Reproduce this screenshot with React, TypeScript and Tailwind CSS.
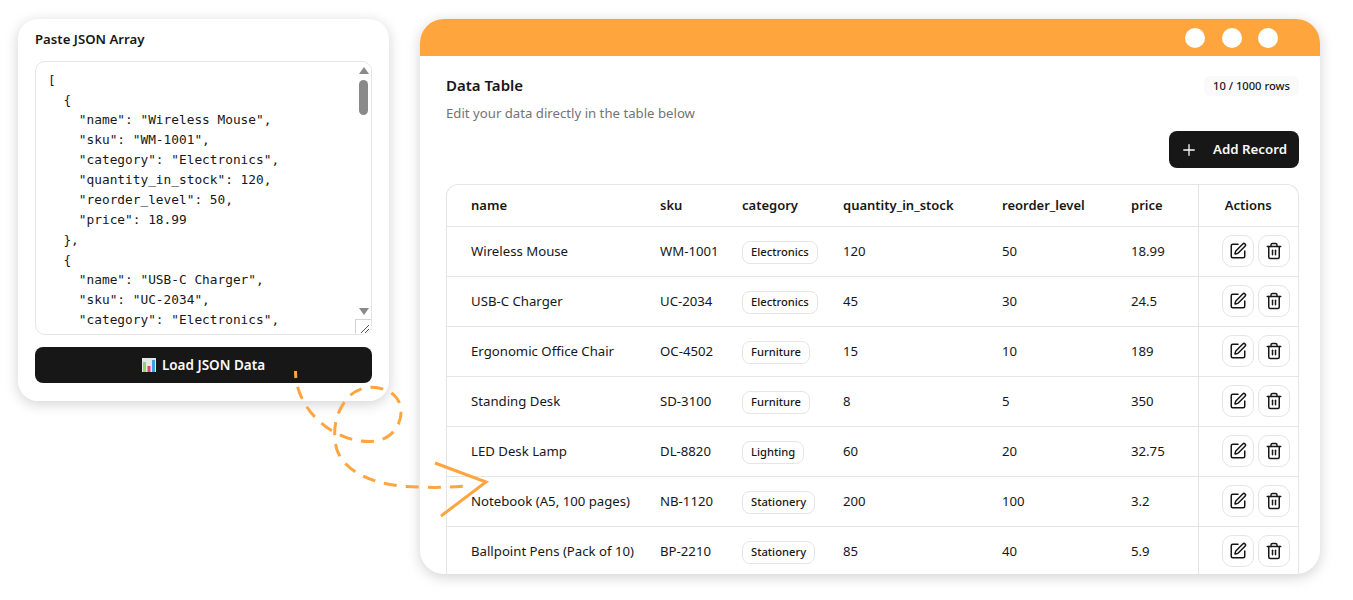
import { Plus, SquarePen, Trash2 } from "lucide-react";

const sampleJson = `[
  {
    "name": "Wireless Mouse",
    "sku": "WM-1001",
    "category": "Electronics",
    "quantity_in_stock": 120,
    "reorder_level": 50,
    "price": 18.99
  },
  {
    "name": "USB-C Charger",
    "sku": "UC-2034",
    "category": "Electronics",
    "quantity_in_stock": 45,`;

const columns = ["name", "sku", "category", "quantity_in_stock", "reorder_level", "price"];

const rows = [
  ["Wireless Mouse", "WM-1001", "Electronics", "120", "50", "18.99"],
  ["USB-C Charger", "UC-2034", "Electronics", "45", "30", "24.5"],
  ["Ergonomic Office Chair", "OC-4502", "Furniture", "15", "10", "189"],
  ["Standing Desk", "SD-3100", "Furniture", "8", "5", "350"],
  ["LED Desk Lamp", "DL-8820", "Lighting", "60", "20", "32.75"],
  ["Notebook (A5, 100 pages)", "NB-1120", "Stationery", "200", "100", "3.2"],
  ["Ballpoint Pens (Pack of 10)", "BP-2210", "Stationery", "85", "40", "5.9"],
];

function ChartIcon() {
  return (
    <svg width="14" height="14" viewBox="0 0 14 14" className="shrink-0">
      <rect x="0" y="0" width="14" height="14" fill="#e8e4e8" />
      <rect x="1" y="4" width="3" height="10" fill="#8ed36f" />
      <rect x="5.5" y="8" width="3" height="6" fill="#ea3d7e" />
      <rect x="10" y="2" width="3" height="12" fill="#3f9fe0" />
    </svg>
  );
}

function ConnectorArrow() {
  return (
    <svg
      className="absolute left-0 top-0 pointer-events-none"
      width="1353"
      height="600"
      viewBox="0 0 1353 600"
      fill="none"
      stroke="#ffa53e"
      strokeWidth="3"
    >
      <path
        d="M295.5 371 C295.5 395 310 418 334 432 C352 442 376 446 390 435 C403 424 405 405 394 395 C380 384 358 384 346 400 C335 414 332 432 337 450 C346 474 378 487 420 487 C438 488 452 487 466 486"
        strokeDasharray="13 9"
        strokeDashoffset="6"
      />
      <path d="M435 463 L486 482 L441 516" />
    </svg>
  );
}

export default function App() {
  return (
    <div className="relative w-[1353px] h-[600px] overflow-hidden bg-white font-['Noto_Sans',sans-serif] text-[#171717]">
      <div className="flex items-start pl-[18px] pt-[19px] gap-[31px]">
        {/* Paste panel */}
        <div className="w-[371px] shrink-0 rounded-[20px] bg-white px-[17px] pt-[11px] pb-[18px] shadow-[0_3px_14px_rgba(0,0,0,0.18)]">
          <h2 className="text-[13.2px] leading-[18px] font-semibold">Paste JSON Array</h2>
          <div className="relative mt-[13px] h-[274px] rounded-[10px] border border-[#e5e5e5] overflow-hidden">
            <textarea
              readOnly
              wrap="off"
              value={sampleJson}
              className="block w-full h-full resize-none overflow-hidden px-3 pt-[8px] font-['DejaVu_Sans_Mono',monospace] text-[12.8px] leading-[20px] text-[#171717] outline-none"
            />
            {/* scrollbar */}
            <div className="absolute right-0 top-0 bottom-0 w-[16px] bg-white">
              <div className="absolute left-[4px] top-[5px] w-0 h-0 border-x-[5px] border-x-transparent border-b-[7px] border-b-[#8a8a8a]" />
              <div className="absolute left-[4px] top-[18px] w-[9px] h-[35px] rounded-full bg-[#8a8a8a]" />
              <div className="absolute left-[4px] bottom-[19px] w-0 h-0 border-x-[5px] border-x-transparent border-t-[7px] border-t-[#8a8a8a]" />
              <div className="absolute right-0 bottom-0 w-[16px] h-[15px] border-l border-t border-[#d4d4d4] bg-white">
                <svg width="15" height="14" viewBox="0 0 15 14" stroke="#555" strokeWidth="1" fill="none">
                  <path d="M5 13 L13 5 M9 13 L13 9" />
                </svg>
              </div>
            </div>
          </div>
          <button className="mt-[12px] flex h-[36px] w-full items-center justify-center gap-[6px] rounded-[8px] bg-[#171717] text-[13.5px] font-semibold text-[#fafafa]">
            <ChartIcon />
            Load JSON Data
          </button>
        </div>

        {/* Table window */}
        <div className="w-[900px] h-[555px] shrink-0 overflow-hidden rounded-[24px] bg-white shadow-[0_3px_14px_rgba(0,0,0,0.18)]">
          <div className="flex h-[37px] items-center justify-end gap-[16.5px] bg-[#ffa53e] pr-[42px]">
            <span className="size-[20px] rounded-full bg-white" />
            <span className="size-[20px] rounded-full bg-white" />
            <span className="size-[20px] rounded-full bg-white" />
          </div>
          <div className="pl-[26px] pr-[21px]">
            <div className="flex items-start justify-between pt-[19px]">
              <div>
                <h1 className="text-[15px] leading-[20px] font-semibold">Data Table</h1>
                <p className="mt-[8px] text-[13.2px] leading-[20px] text-[#737373]">
                  Edit your data directly in the table below
                </p>
              </div>
              <span className="mt-[1px] rounded-[6px] bg-[#fafafa] px-[9px] text-[11.2px] leading-[20px] font-medium">
                10 / 1000 rows
              </span>
            </div>
            <div className="mt-[8px] flex justify-end">
              <button className="flex h-[37px] w-[130px] items-center gap-[15px] rounded-[8px] bg-[#171717] pl-[11px] text-[13.3px] font-semibold text-[#fafafa]">
                <Plus size={18} strokeWidth={1.75} />
                Add Record
              </button>
            </div>
            <div className="mt-[16px] rounded-t-[12px] border border-b-0 border-[#e5e5e5]">
              <table className="w-full table-fixed border-collapse text-[13.2px]">
                <colgroup>
                  <col className="w-[189px]" />
                  <col className="w-[82px]" />
                  <col className="w-[101px]" />
                  <col className="w-[159px]" />
                  <col className="w-[129px]" />
                  <col className="w-[91px]" />
                  <col className="w-[100px]" />
                </colgroup>
                <thead>
                  <tr className="h-[41px] border-b border-[#e5e5e5] text-[13px]">
                    {columns.map((c) => (
                      <th key={c} className="pl-[24px] text-left font-semibold">
                        {c}
                      </th>
                    ))}
                    <th className="border-l border-[#e5e5e5] text-center font-semibold">Actions</th>
                  </tr>
                </thead>
                <tbody>
                  {rows.map((r) => (
                    <tr key={r[1]} className="h-[50px] border-b border-[#e5e5e5]">
                      {r.map((v, i) =>
                        i === 2 ? (
                          <td key={i} className="pl-[24px] pt-[3px] whitespace-nowrap">
                            <span className="inline-flex h-[23px] items-center rounded-[8px] border border-[#e5e5e5] px-[8px] text-[11.2px] font-medium">
                              {v}
                            </span>
                          </td>
                        ) : (
                          <td key={i} className="pl-[24px] pt-[1px] whitespace-nowrap">
                            {v}
                          </td>
                        ),
                      )}
                      <td className="border-l border-[#e5e5e5]">
                        <div className="flex justify-end gap-[4px] pr-[8px]">
                          <button className="flex size-[32px] items-center justify-center rounded-[10px] border border-[#e5e5e5]">
                            <SquarePen size={18} />
                          </button>
                          <button className="flex size-[32px] items-center justify-center rounded-[10px] border border-[#e5e5e5]">
                            <Trash2 size={18} />
                          </button>
                        </div>
                      </td>
                    </tr>
                  ))}
                </tbody>
              </table>
            </div>
          </div>
        </div>
      </div>
      <ConnectorArrow />
    </div>
  );
}
